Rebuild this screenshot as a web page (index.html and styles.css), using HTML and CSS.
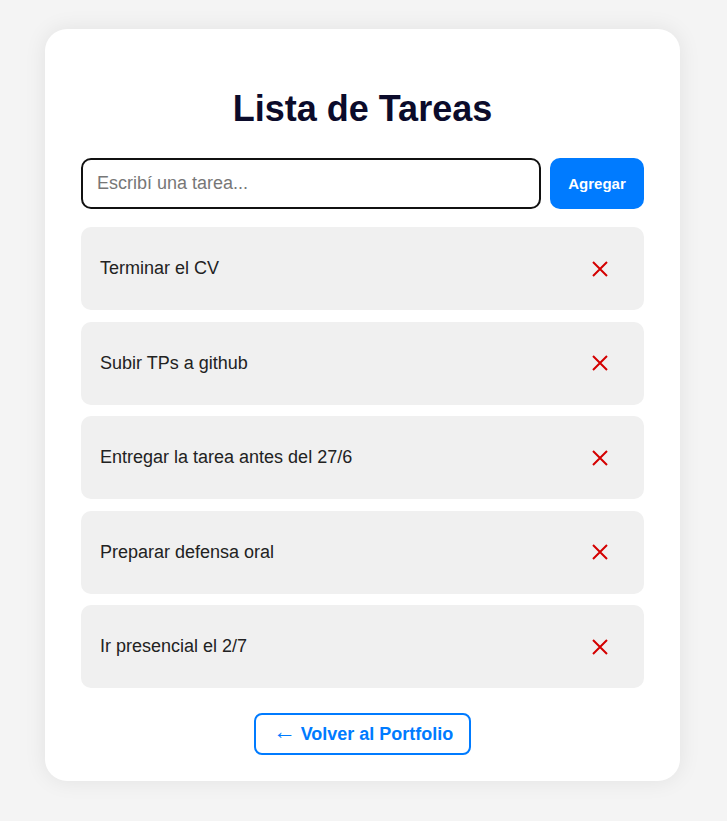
FILE: index.html
```html
<!DOCTYPE html>
<html lang="es">
<head>
<meta charset="UTF-8">
<title>Lista de Tareas</title>
<link rel="stylesheet" href="styles.css">
</head>
<body>
  <main class="card">
    <h1 class="title">Lista de Tareas</h1>
    <form class="add-form">
      <input class="task-input" type="text" placeholder="Escribí una tarea...">
      <button class="add-btn" type="button">Agregar</button>
    </form>
    <ul class="task-list">
      <li class="task"><span class="task-text">Terminar el CV</span><button class="del-btn" type="button" aria-label="Eliminar"><svg class="x-icon" viewBox="0 0 16 16"><path d="M1 1L15 15M15 1L1 15"/></svg></button></li>
      <li class="task"><span class="task-text">Subir TPs a github</span><button class="del-btn" type="button" aria-label="Eliminar"><svg class="x-icon" viewBox="0 0 16 16"><path d="M1 1L15 15M15 1L1 15"/></svg></button></li>
      <li class="task"><span class="task-text">Entregar la tarea antes del 27/6</span><button class="del-btn" type="button" aria-label="Eliminar"><svg class="x-icon" viewBox="0 0 16 16"><path d="M1 1L15 15M15 1L1 15"/></svg></button></li>
      <li class="task"><span class="task-text">Preparar defensa oral</span><button class="del-btn" type="button" aria-label="Eliminar"><svg class="x-icon" viewBox="0 0 16 16"><path d="M1 1L15 15M15 1L1 15"/></svg></button></li>
      <li class="task"><span class="task-text">Ir presencial el 2/7</span><button class="del-btn" type="button" aria-label="Eliminar"><svg class="x-icon" viewBox="0 0 16 16"><path d="M1 1L15 15M15 1L1 15"/></svg></button></li>
    </ul>
    <div class="back-wrap">
      <a class="back-link" href="#"><span class="arrow">←</span> Volver al Portfolio</a>
    </div>
  </main>
</body>
</html>
```

FILE: styles.css
```css
* { box-sizing: border-box; }
html, body {
  margin: 0;
  padding: 0;
  background: #f4f4f4;
  font-family: "Liberation Sans", Arial, sans-serif;
}
body {
  padding: 29px 47px 40px 45px;
}
.card {
  background: #ffffff;
  border-radius: 22px;
  box-shadow: 0 0 22px rgba(0, 0, 0, 0.08);
  padding: 24px 36px 26px;
}
.title {
  margin: 36px 0 29px;
  text-align: center;
  font-size: 36px;
  line-height: 40px;
  font-weight: bold;
  color: #0b0b2b;
}
.add-form {
  display: flex;
  gap: 9px;
  margin: 0 0 18px;
}
.task-input {
  flex: 1;
  height: 51px;
  border: 2px solid #111;
  border-radius: 10px;
  padding: 0 14px;
  font-family: inherit;
  font-size: 18px;
  color: #222;
  outline: none;
}
.task-input::placeholder { color: #777; }
.add-btn {
  width: 94px;
  height: 51px;
  border: none;
  border-radius: 10px;
  background: #007bff;
  color: #fff;
  font-family: inherit;
  font-weight: bold;
  font-size: 15px;
}
.task-list {
  list-style: none;
  margin: 0;
  padding: 0;
  display: flex;
  flex-direction: column;
  gap: 11.5px;
}
.task {
  height: 83px;
  background: #f0f0f0;
  border-radius: 10px;
  display: flex;
  align-items: center;
  justify-content: space-between;
  padding: 0 28px 0 19px;
}
.task-text {
  font-size: 18px;
  color: #222;
}
.del-btn {
  background: none;
  border: none;
  padding: 0 8px;
  line-height: 0;
  display: flex;
  align-items: center;
}
.x-icon {
  width: 16px;
  height: 16px;
  stroke: #d40000;
  stroke-width: 2;
  fill: none;
}
.back-wrap {
  display: flex;
  justify-content: center;
  margin-top: 25px;
}
.back-link {
  display: inline-block;
  height: 42px;
  line-height: 38px;
  padding: 0 16px 0 17px;
  border: 2px solid #007bff;
  border-radius: 8px;
  color: #007bff;
  font-weight: bold;
  font-size: 18px;
  text-decoration: none;
}
.arrow {
  font-weight: normal;
  font-size: 23px;
  line-height: 1;
  vertical-align: 1px;
}
```
